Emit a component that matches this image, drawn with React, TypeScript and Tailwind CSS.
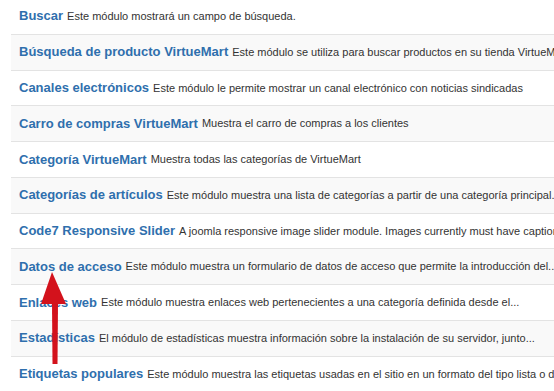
const rows: [string, string][] = [
  ["Buscar", "Este módulo mostrará un campo de búsqueda."],
  ["Búsqueda de producto VirtueMart", "Este módulo se utiliza para buscar productos en su tienda VirtueMart"],
  ["Canales electrónicos", "Este módulo le permite mostrar un canal electrónico con noticias sindicadas"],
  ["Carro de compras VirtueMart", "Muestra el carro de compras a los clientes"],
  ["Categoría VirtueMart", "Muestra todas las categorías de VirtueMart"],
  ["Categorías de artículos", "Este módulo muestra una lista de categorías a partir de una categoría principal."],
  ["Code7 Responsive Slider", "A joomla responsive image slider module. Images currently must have captions"],
  ["Datos de acceso", "Este módulo muestra un formulario de datos de acceso que permite la introducción del..."],
  ["Enlaces web", "Este módulo muestra enlaces web pertenecientes a una categoría definida desde el..."],
  ["Estadísticas", "El módulo de estadísticas muestra información sobre la instalación de su servidor, junto..."],
  ["Etiquetas populares", "Este módulo muestra las etiquetas usadas en el sitio en un formato del tipo lista o de nube"],
];

export default function App() {
  return (
    <div className="relative w-[554px] h-[391px] overflow-hidden bg-white font-['Liberation_Sans',Arial,sans-serif]">
      <div className="ml-[11px] w-[700px] -mt-[2px]">
        {rows.map(([title, desc], i) => (
          <div
            key={i}
            className={`h-[35.75px] flex items-center px-2 whitespace-nowrap ${i > 0 ? "border-t border-[#e3e3e3]" : ""} ${i % 2 === 1 ? "bg-[#f9f9f9]" : "bg-white"}`}
          >
            <a href="#" className="text-[13px] font-bold text-[#2f6fad] mr-1">
              {title}
            </a>
            <span className="text-[11px] text-[#333333]">{desc}</span>
          </div>
        ))}
        <div className="border-t border-[#e3e3e3]" />
      </div>

      {/* red annotation arrow */}
      <svg className="absolute left-0 top-0" width="554" height="391" viewBox="0 0 554 391">
        <polygon points="52,272 41,304 66,304" fill="#d3121c" />
        <polygon points="52,303 58,303 57.5,364 52.5,364" fill="#d3121c" />
      </svg>
    </div>
  );
}
